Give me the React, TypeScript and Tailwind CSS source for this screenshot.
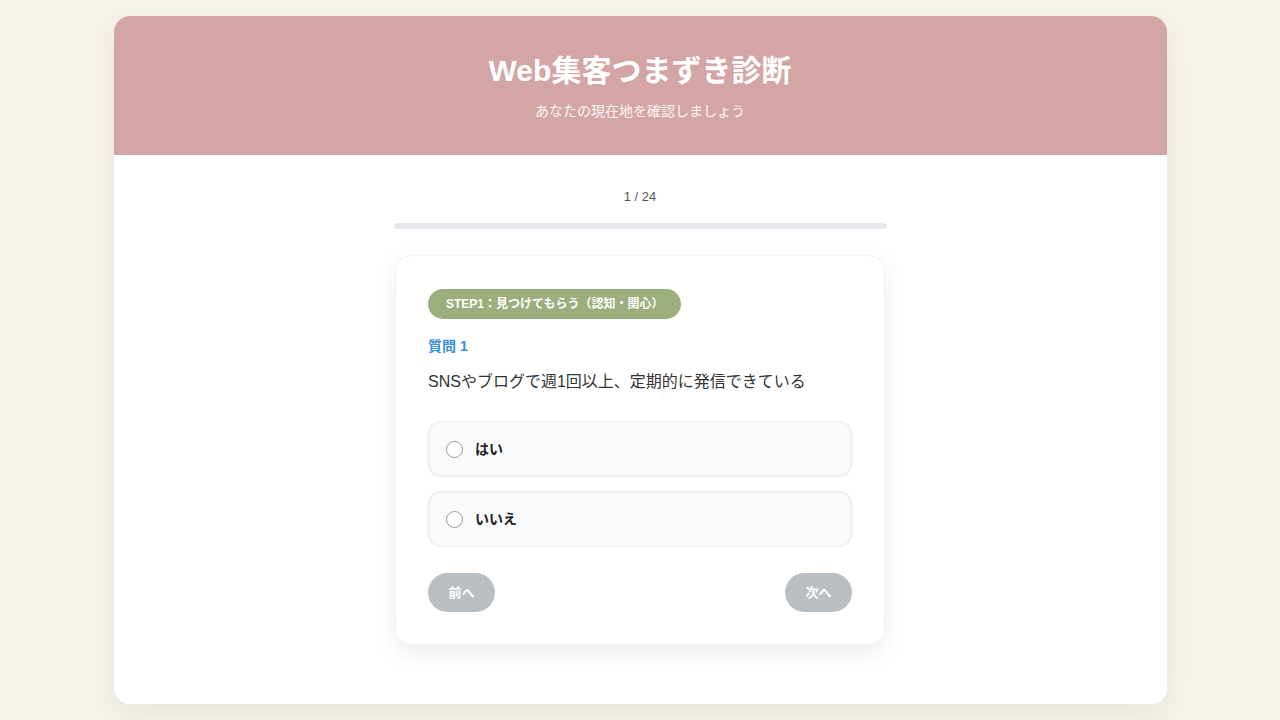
import React from "react";

const font = { fontFamily: '"Liberation Sans", "Noto Sans CJK JP", sans-serif' };

export default function App() {
  return (
    <div className="min-h-[720px] w-full bg-[#f4f2eb] pt-4" style={font}>
      <div className="mx-auto w-[1053px] h-[688px] rounded-2xl bg-white overflow-hidden shadow-[0_10px_30px_rgba(0,0,0,0.06)]">
        <div className="bg-[#d4a5a5] h-[139px] flex flex-col items-center pt-[37px]">
          <h1 className="text-[30px] leading-[36px] font-bold text-white">Web集客つまずき診断</h1>
          <p className="mt-3 text-[14px] leading-[20px] text-white/90">あなたの現在地を確認しましょう</p>
        </div>
        <div className="flex flex-col items-center pt-[32px]">
          <div className="text-[13px] leading-[20px] text-[#555]">1 / 24</div>
          <div className="mt-[16px] w-[493px] h-[6px] rounded-full bg-[#e8e9ec]"></div>
          <div className="mt-[26px] w-[490px] rounded-2xl bg-white border border-[#f3f3f3] shadow-[0_8px_24px_rgba(0,0,0,0.08)] px-[32px] pt-[33px] pb-[32px]">
            <div className="inline-flex items-center h-[30px] px-[18px] rounded-full bg-[#9cae7b] text-white text-[12px] font-bold">
              STEP1：見つけてもらう（認知・関心）
            </div>
            <div className="mt-[17px] text-[14px] leading-[20px] font-bold text-[#3a8fd6]">質問 1</div>
            <div className="mt-[14px] text-[16px] leading-[24px] text-[#333]">SNSやブログで週1回以上、定期的に発信できている</div>
            <div className="mt-[27px] flex flex-col gap-[14px]">
              {["はい", "いいえ"].map((t) => (
                <div key={t} className="h-[56px] rounded-xl border-2 border-[#eff1f3] bg-[#f9fafb] flex items-center px-[16px]">
                  <span className="w-[17px] h-[17px] rounded-full border border-[#9a9a9a] bg-white"></span>
                  <span className="ml-[12px] text-[14px] font-bold text-[#222]">{t}</span>
                </div>
              ))}
            </div>
            <div className="mt-[26px] flex justify-between">
              <button className="h-[39px] w-[67px] rounded-full bg-[#b9bec3] text-white text-[13px] font-bold">前へ</button>
              <button className="h-[39px] w-[67px] rounded-full bg-[#b9bec3] text-white text-[13px] font-bold">次へ</button>
            </div>
          </div>
        </div>
      </div>
    </div>
  );
}
